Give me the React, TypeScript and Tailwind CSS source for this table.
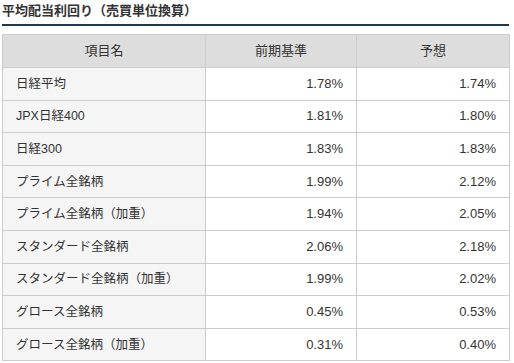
const rows: [string, string, string][] = [
  ['日経平均', '1.78%', '1.74%'],
  ['JPX日経400', '1.81%', '1.80%'],
  ['日経300', '1.83%', '1.83%'],
  ['プライム全銘柄', '1.99%', '2.12%'],
  ['プライム全銘柄（加重）', '1.94%', '2.05%'],
  ['スタンダード全銘柄', '2.06%', '2.18%'],
  ['スタンダード全銘柄（加重）', '1.99%', '2.02%'],
  ['グロース全銘柄', '0.45%', '0.53%'],
  ['グロース全銘柄（加重）', '0.31%', '0.40%'],
]

export default function App() {
  return (
    <div className="bg-white w-[514px] h-[363px] overflow-hidden font-['Liberation_Sans','Noto_Sans_CJK_JP',sans-serif] text-[#333]">
      <div className="ml-[2px] w-[507px]">
        <h2 className="pt-[1px] pb-[3px] text-[13px] leading-[20px] font-bold text-[#333] border-b-2 border-[#1e3a50]">
          平均配当利回り（売買単位換算）
        </h2>
        <table className="mt-[8px] w-full border-collapse text-[13px] leading-[18px] table-fixed">
          <colgroup>
            <col className="w-[203px]" />
            <col className="w-[151px]" />
            <col className="w-[153px]" />
          </colgroup>
          <thead>
            <tr className="h-[33px] bg-[#dddddd]">
              <th className="border border-[#cccccc] font-normal text-center">項目名</th>
              <th className="border border-[#cccccc] font-normal text-center">前期基準</th>
              <th className="border border-[#cccccc] font-normal text-center">予想</th>
            </tr>
          </thead>
          <tbody>
            {rows.map(([name, prev, est]) => (
              <tr key={name} className="h-[32.6px]">
                <td className="border border-[#cccccc] bg-[#f5f5f5] px-[13px] text-[12.5px]">{name}</td>
                <td className="border border-[#cccccc] px-[13px] text-right">{prev}</td>
                <td className="border border-[#cccccc] px-[13px] text-right">{est}</td>
              </tr>
            ))}
          </tbody>
        </table>
      </div>
    </div>
  )
}
